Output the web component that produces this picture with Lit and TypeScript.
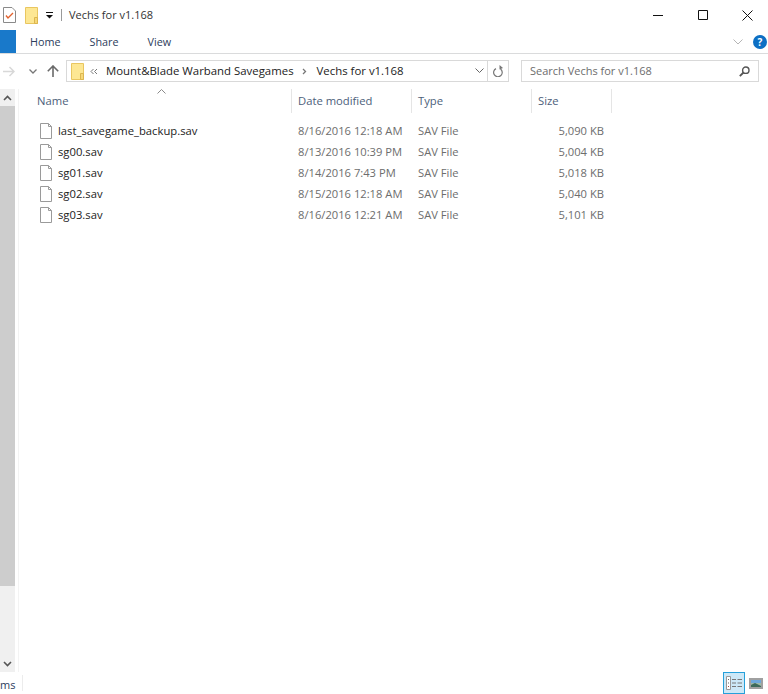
import { LitElement, html, css, svg } from "lit";
import { customElement } from "lit/decorators.js";

const files = [
  ["last_savegame_backup.sav", "8/16/2016 12:18 AM", "5,090 KB"],
  ["sg00.sav", "8/13/2016 10:39 PM", "5,004 KB"],
  ["sg01.sav", "8/14/2016 7:43 PM", "5,018 KB"],
  ["sg02.sav", "8/15/2016 12:18 AM", "5,040 KB"],
  ["sg03.sav", "8/16/2016 12:21 AM", "5,101 KB"],
];

const folder = svg`<svg class="ico" width="13" height="17" viewBox="0 0 13 17"><path d="M.5.5h12v16H.5z" fill="#fde793" stroke="#e9c660"/><path d="M9.500 10.500h3v6h-3z" fill="#f6d878" stroke="#dcb64f"/></svg>`;

@customElement("app-root")
export class AppRoot extends LitElement {
  static styles = css`
    :host {
      display: flex;
      flex-direction: column;
      width: 768px;
      height: 694px;
      overflow: hidden;
      background: #fff;
      font-family: "Open Sans", "Noto Sans", sans-serif;
      font-size: 11px;
      color: #1e1e1e;
    }
    .ico { display: block; flex: none; }
    .title {
      height: 30px;
      flex: none;
      display: flex;
      align-items: center;
      padding-left: 3px;
    }
    .qat2 { margin-left: 9px; }
    .qat3 { margin-left: 8px; }
    .bar { width: 1px; height: 12px; background: #9a9a9a; margin: 0 7px 0 8px; }
    .title-text { font-size: 11px; color: #333; flex: 1; padding-bottom: 1px; }
    .winbtns { display: flex; align-items: center; margin-right: -2px; }
    .winbtn { width: 45px; display: flex; justify-content: center; }
    .ribbon {
      height: 23px;
      flex: none;
      display: flex;
      align-items: center;
      border-bottom: 1px solid #dadbdc;
    }
    .file { width: 16px; height: 23px; background: #1979ca; align-self: flex-start; }
    .tabs { display: flex; flex: 1; color: #2c3c5c; font-size: 10.8px; padding-left: 14px; gap: 29px; }
    .rib-right { display: flex; align-items: center; gap: 10px; margin-right: 1px; }
    .help {
      width: 14px; height: 14px; border-radius: 50%;
      background: #0d6fc4; color: #fff; font-size: 10px; font-weight: 700;
      display: flex; align-items: center; justify-content: center;
    }
    .nav {
      height: 34px;
      padding-bottom: 1px;
      flex: none;
      display: flex;
      align-items: center;
      padding-left: 3px;
    }
    .navi1 { margin-left: 14px; }
    .navi2 { margin-left: 10px; }
    .addr {
      margin-left: 7px;
      width: 422px;
      height: 22px;
      box-sizing: border-box;
      border: 1px solid #d9d9d9;
      display: flex;
      align-items: center;
      padding-left: 4px;
      font-size: 11.4px;
      color: #222;
    }
    .addr span { padding-bottom: 2px; }
    .chev { margin: 0 8px 0 6px; }
    .crumb-sep { margin: 0 10px 0 8px; }
    .crumb-space { flex: 1; }
    .addr-drop { margin-right: 3px; }
    .refresh {
      width: 21px;
      height: 22px;
      box-sizing: border-box;
      border: 1px solid #d9d9d9;
      border-left: 0;
      display: flex;
      align-items: center;
      justify-content: center;
      margin-right: 12px;
    }
    .search {
      width: 238px;
      height: 22px;
      box-sizing: border-box;
      border: 1px solid #d9d9d9;
      display: flex;
      align-items: center;
      justify-content: space-between;
      padding: 0 8px;
      color: #6d6d6d;
      font-size: 11px;
    }
    .search span { padding-bottom: 2px; }
    .main { flex: 1; display: flex; min-height: 0; }
    .scroll {
      width: 15px;
      flex: none;
      background: #f0f0f0;
      display: flex;
      flex-direction: column;
    }
    .sbtn { height: 17px; display: flex; align-items: center; justify-content: center; flex: none; }
    .thumb { height: 480px; background: #cdcdcd; flex: none; }
    .track { flex: 1; }
    .divider { width: 1px; background: #f3f3f3; margin-left: 3px; flex: none; }
    .content { flex: 1; min-width: 0; position: relative; }
    .sort { position: absolute; left: 138px; top: 0; }
    .head, .row {
      display: grid;
      grid-template-columns: 273px 120px 120px 80px;
    }
    .head { height: 24px; color: #4c607a; font-size: 11.25px; margin-bottom: 7px; }
    .hcell {
      display: flex;
      align-items: center;
      padding-left: 6px;
      padding-bottom: 1px;
      border-right: 1px solid #e5e5e5;
    }
    .hcell:first-child { padding-left: 18px; }
    .row { height: 21px; align-items: center; color: #6d6d6d; font-size: 11.2px; }
    .name { display: flex; align-items: center; gap: 6px; padding-left: 21px; color: #222; font-size: 11.25px; }
    .cell { padding-left: 6px; }
    .size { text-align: right; padding-right: 8px; }
    .status {
      height: 22px;
      flex: none;
      display: flex;
      align-items: center;
      color: #2c3c5c;
      font-size: 11px;
    }
    .count { width: 23px; box-sizing: border-box; border-right: 1px solid #ececec; height: 16px; line-height: 20px; flex: none; }
    .views { margin-left: auto; display: flex; align-items: center; gap: 4px; padding-right: 5px; }
    .view-on {
      width: 22px; height: 22px; box-sizing: border-box;
      background: #cce8f7; border: 1px solid #26a0da;
      display: flex; align-items: center; justify-content: center;
    }
  `;

  render() {
    return html`
      <div class="title">
        <svg class="ico" width="13" height="16" viewBox="0 0 13 16"><path d="M.5.500h8.500l3.500 3.500v11.500H.5z" fill="#fff" stroke="#8a8a8a"/><path d="M3 8.500l2 2.500 5-5" fill="none" stroke="#e2622e" stroke-width="1.400"/></svg>
        <span class="qat2">${folder}</span>
        <svg class="ico qat3" width="7" height="7" viewBox="0 0 7 7"><path d="M0 .5h7" stroke="#111"/><path d="M0 3h7L3.500 6.500z" fill="#111"/></svg>
        <span class="bar"></span>
        <span class="title-text">Vechs for v1.168</span>
        <div class="winbtns">
          <div class="winbtn"><svg class="ico" width="10" height="10" viewBox="0 0 10 10"><path d="M0 5.500h10" stroke="#111"/></svg></div>
          <div class="winbtn"><svg class="ico" width="10" height="10" viewBox="0 0 10 10"><path d="M.5.500h9v9h-9z" fill="none" stroke="#111"/></svg></div>
          <div class="winbtn"><svg class="ico" width="11" height="11" viewBox="0 0 11 11"><path d="M.5.500l10 10M10.500.500l-10 10" fill="none" stroke="#111"/></svg></div>
        </div>
      </div>

      <div class="ribbon">
        <div class="file"></div>
        <div class="tabs"><span>Home</span><span>Share</span><span>View</span></div>
        <div class="rib-right">
          <svg class="ico" width="10" height="6" viewBox="0 0 10 6"><path d="M.5.500l4.500 4.500 4.500-4.500" fill="none" stroke="#b5b5b5"/></svg>
          <div class="help">?</div>
        </div>
      </div>

      <div class="nav">
        <svg class="ico" width="12" height="11" viewBox="0 0 12 11"><path d="M0 5.500h11M6.500 1l4.500 4.500-4.500 4.500" fill="none" stroke="#d8d8d8" stroke-width="1.500"/></svg>
        <svg class="ico navi1" width="8" height="5" viewBox="0 0 8 5"><path d="M.5.500l3.500 3.500 3.500-3.500" fill="none" stroke="#777" stroke-width="1.300"/></svg>
        <svg class="ico navi2" width="12" height="12" viewBox="0 0 12 12"><path d="M6 12V1M.8 6.200L6 1l5.200 5.200" fill="none" stroke="#6a6a6a" stroke-width="1.600"/></svg>
        <div class="addr">
          ${folder}
          <svg class="ico chev" width="8" height="7" viewBox="0 0 8 7"><path d="M3.500 1l-2.500 2.500 2.500 2.500M7 1l-2.500 2.500 2.500 2.500" fill="none" stroke="#777"/></svg>
          <span>Mount&amp;Blade Warband Savegames</span>
          <svg class="ico crumb-sep" width="5" height="7" viewBox="0 0 5 7"><path d="M1 1l2.500 2.500L1 6" fill="none" stroke="#777" stroke-width="1.300"/></svg>
          <span>Vechs for v1.168</span>
          <span class="crumb-space"></span>
          <svg class="ico addr-drop" width="9" height="6" viewBox="0 0 9 6"><path d="M.5.500l4 4 4-4" fill="none" stroke="#666"/></svg>
        </div>
        <div class="refresh">
          <svg class="ico" width="11" height="12" viewBox="0 0 11 12"><path d="M3.500 2.800A4.300 4.300 0 1 0 8 3.200" fill="none" stroke="#777" stroke-width="1.200" transform="translate(-.5 .8)"/><path d="M6.500 0v4.500L10 3z" fill="#777"/></svg>
        </div>
        <div class="search">
          <span>Search Vechs for v1.168</span>
          <svg class="ico" width="11" height="11" viewBox="0 0 11 11"><circle cx="6.800" cy="4.200" r="3.200" fill="none" stroke="#555" stroke-width="1.400"/><path d="M4.500 6.500L.8 10.200" stroke="#555" stroke-width="1.800"/></svg>
        </div>
      </div>

      <div class="main">
        <div class="scroll">
          <div class="sbtn"><svg class="ico" width="9" height="6" viewBox="0 0 9 6"><path d="M1 5l3.500-3.500L8 5" fill="none" stroke="#555" stroke-width="1.600"/></svg></div>
          <div class="thumb"></div>
          <div class="track"></div>
          <div class="sbtn"><svg class="ico" width="9" height="6" viewBox="0 0 9 6"><path d="M1 1l3.500 3.500L8 1" fill="none" stroke="#555" stroke-width="1.600"/></svg></div>
        </div>
        <div class="divider"></div>
        <div class="content">
          <svg class="ico sort" width="9" height="5" viewBox="0 0 9 5"><path d="M.5 4.500l4-4 4 4" fill="none" stroke="#8a8a8a"/></svg>
          <div class="head">
            <div class="hcell">Name</div>
            <div class="hcell">Date modified</div>
            <div class="hcell">Type</div>
            <div class="hcell">Size</div>
          </div>
          ${files.map(
            ([n, d, s]) => html`<div class="row">
              <div class="name">
                <svg class="ico" width="12" height="16" viewBox="0 0 12 16"><path d="M.5.500h8l3 3v12H.5z" fill="#fff" stroke="#9a9a9a"/><path d="M8.500.500v3h3" fill="none" stroke="#9a9a9a"/></svg>
                <span>${n}</span>
              </div>
              <div class="cell">${d}</div>
              <div class="cell">SAV File</div>
              <div class="size">${s}</div>
            </div>`
          )}
        </div>
      </div>

      <div class="status">
        <div class="count">ms</div>
        <div class="views">
          <div class="view-on">
            <svg class="ico" width="16" height="14" viewBox="0 0 16 14"><path d="M.5.500h4v13h-4z" fill="#fff" stroke="#999"/><path d="M2 3h1v1H2zM2 6.500h1v1H2z" fill="#666"/><path d="M2 10h1v1H2z" fill="#b04a3a"/><path d="M6 3.500h4M11.500 3.500H16M6 7h4M11.500 7H16M6 10.500h4M11.500 10.500H16" stroke="#777"/></svg>
          </div>
          <svg class="ico" width="14" height="11" viewBox="0 0 14 11"><path d="M1 1h12v9H1z" fill="#fff" stroke="#a0a0a0" stroke-width="2"/><path d="M2 2h10v3H2z" fill="#6ea8dc"/><path d="M2 5h10v4H2z" fill="#9db9a6"/><path d="M2 7l4-2 6 3v1H2z" fill="#3d6a5a"/></svg>
        </div>
      </div>
    `;
  }
}
